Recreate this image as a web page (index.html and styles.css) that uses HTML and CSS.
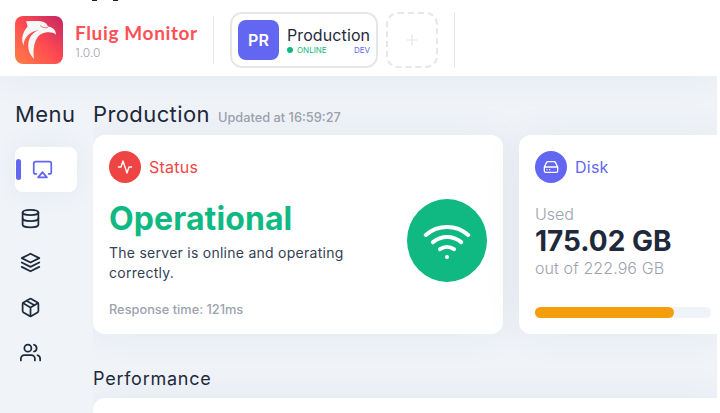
FILE: index.html
```html
<!DOCTYPE html>
<html lang="en">
<head>
<meta charset="utf-8">
<title>Fluig Monitor</title>
<link rel="stylesheet" href="styles.css">
</head>
<body>
<header class="topbar">
  <span class="clip-mark" aria-hidden="true"><i></i><i></i></span>
  <div class="brand">
    <svg class="logo" viewBox="0 0 48 48">
      <defs><linearGradient id="lg" x1="0" y1="1" x2="1" y2="0"><stop offset="0" stop-color="#ff8048"/><stop offset=".5" stop-color="#ff4b50"/><stop offset="1" stop-color="#c42463"/></linearGradient></defs>
      <rect width="48" height="48" rx="8" fill="url(#lg)"/>
      <path fill="#f7f7f7" d="M11 5.200C16 5 23 4.600 27 5.500C30 6.200 32 8 33 10.500C37 11 41 13.500 41 18.700C39 16.500 35.500 16 32 16.300C27 17 23.500 19 21.500 23C18.500 29 18 35 19 43C14 38 12.500 32 13.500 26C14.500 21 17.500 17 23 14C15 16 9 21 8.500 29.500C6 24 7 17 12.500 10.800C12.500 9 12 8 11 5.200Z"/>
      <path d="M25.500 10C27.500 11.700 30 12 32.500 11.600" fill="none" stroke="#ff5656" stroke-width=".8"/>
    </svg>
    <div class="brand-text"><div class="brand-name">Fluig Monitor</div><div class="version">1.0.0</div></div>
  </div>
  <div class="rule"></div>
  <div class="env">
    <div class="env-badge">PR</div>
    <div class="env-info">
      <div class="env-name">Production</div>
      <div class="env-meta"><span class="online"><i></i>ONLINE</span><span class="kind">DEV</span></div>
    </div>
  </div>
  <div class="add"><svg viewBox="0 0 12 12"><path d="M6 .5v11M.5 6h11"/></svg></div>
  <div class="rule tall"></div>
</header>
<div class="body">
  <nav class="side">
    <h2 class="title">Menu</h2>
    <a class="item active"><svg viewBox="0 0 24 24"><path d="M5 17H4a2 2 0 0 1-2-2V5a2 2 0 0 1 2-2h16a2 2 0 0 1 2 2v10a2 2 0 0 1-2 2h-1"/><path d="M12 15l5 6H7z"/></svg></a>
    <a class="item"><svg viewBox="0 0 24 24"><ellipse cx="12" cy="5" rx="9" ry="3"/><path d="M21 12c0 1.660-4 3-9 3s-9-1.340-9-3"/><path d="M3 5v14c0 1.660 4 3 9 3s9-1.340 9-3V5"/></svg></a>
    <a class="item"><svg viewBox="0 0 24 24"><path d="M12 2 2 7l10 5 10-5zM2 17l10 5 10-5M2 12l10 5 10-5"/></svg></a>
    <a class="item"><svg viewBox="0 0 24 24"><path d="M16.500 9.400l-9-5.190M21 16V8a2 2 0 0 0-1-1.730l-7-4a2 2 0 0 0-2 0l-7 4A2 2 0 0 0 3 8v8a2 2 0 0 0 1 1.730l7 4a2 2 0 0 0 2 0l7-4A2 2 0 0 0 21 16z"/><path d="M3.270 6.960L12 12.010l8.730-5.050M12 22.080V12"/></svg></a>
    <a class="item"><svg viewBox="0 0 24 24"><path d="M17 21v-2a4 4 0 0 0-4-4H5a4 4 0 0 0-4 4v2"/><circle cx="9" cy="7" r="4"/><path d="M23 21v-2a4 4 0 0 0-3-3.870M16 3.130a4 4 0 0 1 0 7.750"/></svg></a>
  </nav>
  <main class="main">
    <div class="heading"><h1 class="title">Production</h1><span class="updated">Updated at 16:59:27</span></div>
    <div class="cards">
      <section class="card status">
        <div class="card-head red"><span class="dot"><svg viewBox="0 0 24 24"><path d="M22 12h-4l-3 9L9 3l-3 9H2"/></svg></span>Status</div>
        <div class="status-body">
          <div class="status-text">
            <div class="operational">Operational</div>
            <p class="desc">The server is online and operating correctly.</p>
            <div class="response">Response time: 121ms</div>
          </div>
          <div class="wifi"><svg viewBox="0 0 24 24"><path d="M5 12.550a11 11 0 0 1 14.080 0M1.420 9a16 16 0 0 1 21.160 0M8.530 16.110a6 6 0 0 1 6.950 0M12 20h.01"/></svg></div>
        </div>
      </section>
      <section class="card disk">
        <div class="card-head violet"><span class="dot"><svg viewBox="0 0 24 24"><path d="M22 12H2M5.450 5.110L2 12v6a2 2 0 0 0 2 2h16a2 2 0 0 0 2-2v-6l-3.450-6.890A2 2 0 0 0 16.760 4H7.240a2 2 0 0 0-1.790 1.110zM6 16h.01M10 16h.01"/></svg></span>Disk</div>
        <div class="used">Used</div>
        <div class="amount">175.02 GB</div>
        <div class="total">out of 222.96 GB</div>
        <div class="track"><div class="fill"></div></div>
      </section>
    </div>
    <h2 class="subtitle">Performance</h2>
    <section class="card perf"></section>
  </main>
</div>
</body>
</html>
```

FILE: styles.css
```css
* { box-sizing: border-box; margin: 0; }
html, body { height: 100%; overflow: hidden; }
html { background: #fff; }
body { background: #f0f4f9; font-family: Inter, sans-serif; color: #1e293b; display: flex; flex-direction: column; width: 717px; }
svg { fill: none; stroke: currentColor; stroke-width: 2; stroke-linecap: round; stroke-linejoin: round; display: block; }
.topbar { position: relative; z-index: 1; flex: 0 0 76px; background: #fff; display: flex; align-items: flex-start; padding-left: 15px; box-shadow: 0 0 40px rgba(30, 50, 70, .06); }
.clip-mark { position: absolute; left: 92px; top: 0; display: flex; gap: 16px; }
.clip-mark i { width: 5px; height: 1px; background: #222; }
.brand { display: flex; gap: 12px; width: 198px; margin-top: 16px; }
.logo { width: 48px; height: 48px; stroke: none; flex: none; }
.brand-text { padding-top: 4px; }
.brand-name { font: 700 19px/26px Lato, sans-serif; color: #ff5055; white-space: nowrap; letter-spacing: .63px; }
.version { font-size: 12px; line-height: 14px; font-weight: 300; color: #9ca3af; }
.rule { width: 1px; height: 48px; margin-top: 16px; background: #e5e7eb; }
.rule.tall { height: 56px; margin: 12px 0 0 16px; }
.env { width: 148px; height: 56px; margin: 12px 8px 0 16px; border: 2px solid #e5e7eb; border-radius: 12px; display: flex; padding: 6px; gap: 8px; }
.env-badge { width: 41px; height: 40px; border-radius: 8px; background: #6366f1; color: #fff; font-weight: 600; font-size: 16px; line-height: 40px; text-align: center; flex: none; }
.env-info { width: 83px; padding-top: 6px; }
.env-name { font-size: 16px; line-height: 19px; white-space: nowrap; letter-spacing: .1px; }
.env-meta { display: flex; justify-content: space-between; font-size: 8px; line-height: 10px; }
.online { color: #10b981; display: flex; align-items: center; gap: 4px; }
.online i { width: 6px; height: 6px; border-radius: 50%; background: #10b981; }
.kind { color: #6366f1; }
.add { width: 52px; height: 56px; margin-top: 12px; border: 2px dashed #e5e7eb; border-radius: 12px; color: #e5e7eb; display: grid; place-items: center; }
.add svg { width: 12px; height: 12px; stroke-width: 1.2; stroke-linecap: butt; }
.body { flex: 1; display: flex; min-height: 0; }
.side { width: 93px; padding: 24px 16px 0 15px; flex: none; }
.title { font-size: 22px; line-height: 28px; font-weight: 400; letter-spacing: .4px; }
.item { display: flex; align-items: center; height: 44.670px; padding-left: 5px; }
.item svg { width: 21px; height: 21px; }
.item.active { height: 45px; width: 62px; margin: 19px 0 4px; padding-left: 1px; gap: 11px; background: #fff; border-radius: 8px; color: #6366f1; box-shadow: 0 0 30px rgba(30, 50, 70, .06); }
.item.active::before { content: ""; width: 5px; height: 21px; border-radius: 3px; background: #6366f1; }
.main { flex: 1; min-width: 0; padding-top: 24px; overflow: hidden; }
.heading { display: flex; align-items: baseline; gap: 8px; height: 35px; }
.updated { font-size: 12.800px; font-weight: 500; color: #9ca3af; }
.cards { display: flex; gap: 16px; width: 634px; }
.card { background: #fff; border-radius: 12px; padding: 16px; box-shadow: 0 0 40px rgba(30, 50, 70, .06); }
.status { width: 410px; height: 199px; }
.disk { width: 208px; height: 199px; }
.card-head { display: flex; align-items: center; gap: 8px; font-size: 16px; height: 32px; letter-spacing: .25px; }
.dot { width: 32px; height: 32px; border-radius: 50%; background: currentColor; display: grid; place-items: center; }
.dot svg { width: 16px; height: 16px; stroke: #fff; }
.red { color: #ef4444; }
.violet { color: #6366f1; }
.status-body { display: flex; justify-content: space-between; }
.operational { font-size: 32px; line-height: 38px; font-weight: 700; color: #10b981; margin-top: 17px; letter-spacing: .1px; }
.desc { width: 250px; font-size: 14px; line-height: 20px; color: #334155; letter-spacing: .26px; margin-top: 5px; }
.response { font-size: 12.800px; line-height: 16px; font-weight: 500; color: #9ca3af; margin-top: 19px; }
.wifi { width: 80px; height: 83px; border-radius: 50%; background: #10b981; margin-top: 16px; color: #fff; display: grid; place-items: center; }
.wifi svg { width: 48px; height: 48px; }
.used, .total { font-size: 16px; line-height: 20px; font-weight: 300; color: #9ca3af; }
.used { margin-top: 21px; }
.total { letter-spacing: .1px; }
.amount { font-size: 28px; line-height: 34px; font-weight: 700; white-space: nowrap; }
.track { width: 176px; height: 11px; margin-top: 29px; border-radius: 6px; background: #f0f4f9; }
.fill { width: 79%; height: 11px; border-radius: 6px; background: #f59e0b; }
.subtitle { font-size: 18px; line-height: 24px; font-weight: 400; letter-spacing: .75px; margin-top: 33px; }
.perf { width: 634px; height: 150px; margin-top: 7px; }
```
